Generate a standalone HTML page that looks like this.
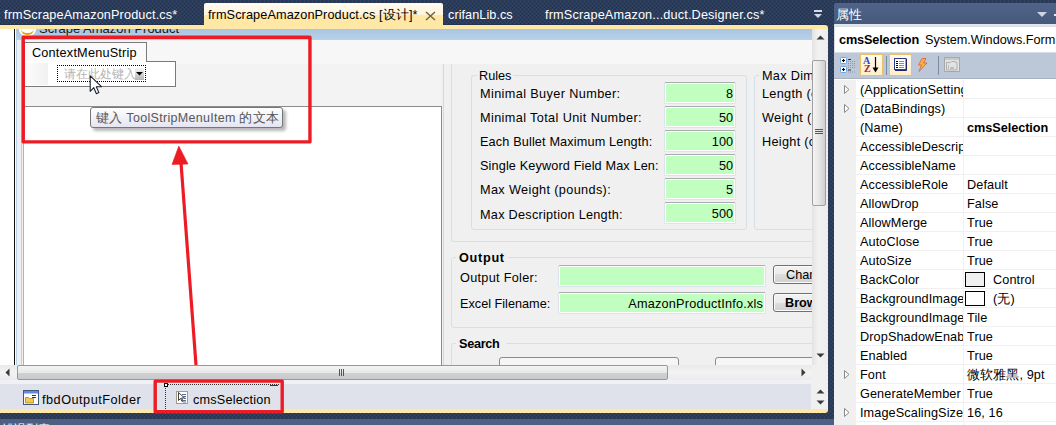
<!DOCTYPE html>
<html><head><meta charset="utf-8">
<style>
*{margin:0;padding:0;box-sizing:border-box}
html,body{width:1056px;height:425px;overflow:hidden;background:#2c3c59;font-family:"Liberation Sans",sans-serif;font-size:12.7px;color:#000}
.a{position:absolute}
.t{position:absolute;white-space:nowrap;line-height:1}
.tb{position:absolute;width:72px;height:22px;background:#c0ffc0;border:1px solid #dde3ea;border-top-color:#abadb3;border-radius:2px;box-shadow:inset 0 0 0 1px #fff}
.tb span,.tb2 span{position:absolute;right:2px;top:5px;line-height:1;white-space:nowrap}
.tb2{position:absolute;height:22px;background:#c0ffc0;border:1px solid #dde3ea;border-top-color:#abadb3;border-radius:2px;box-shadow:inset 0 0 0 1px #fff}
.btn{position:absolute;width:70px;height:19px;border:1px solid #707070;border-radius:3px;background:linear-gradient(#f2f2f2,#ebebeb 50%,#dddddd 50%,#cfcfcf);box-shadow:inset 0 0 0 1px #fcfcfc}
.btn span{position:absolute;left:12px;top:3px;line-height:1;white-space:nowrap}
.gb{position:absolute;border:1px solid #d5dfe5;border-radius:3px}
.pr{position:absolute;left:0;width:222px;height:19px;border-bottom:1px solid #f0f0f0}
.pr::before{content:"";position:absolute;left:0;top:0;width:22px;height:19px;background:#f0f0f0}
.pr::after{content:"";position:absolute;left:129px;top:0;width:1px;height:19px;background:#f0f0f0}
.pn{position:absolute;left:26px;top:4px;width:103px;overflow:hidden;white-space:nowrap;line-height:1;letter-spacing:.1px}
.pv{position:absolute;left:133px;top:4px;white-space:nowrap;line-height:1;letter-spacing:.1px}
.sw{left:131px;top:2px;width:20px;height:15px;border:1px solid #000}
</style></head><body>
<div class="a" style="left:0;top:0;width:1056px;height:425px;overflow:hidden">
<svg class="a" style="left:0;top:0" width="1056" height="425"><defs><pattern id="dots" width="4" height="4" patternUnits="userSpaceOnUse"><rect width="4" height="4" fill="#2b3c5a"/><rect x="0" y="1" width="1" height="1" fill="#36496b"/><rect x="2" y="3" width="1" height="1" fill="#36496b"/><rect x="2" y="1" width="1" height="1" fill="#243350"/><rect x="0" y="3" width="1" height="1" fill="#243350"/></pattern></defs><rect width="1056" height="425" fill="url(#dots)"/></svg>

<!-- ===== tab bar ===== -->
<div class="t" style="left:4px;top:9px;color:#fff;letter-spacing:.13px">frmScrapeAmazonProduct.cs*</div>
<div class="a" style="left:204px;top:3px;width:239px;height:24px;border-radius:2px 2px 0 0;background:linear-gradient(#fffcf4,#fff4d8 48%,#ffe8a6 52%,#ffe8a6)"></div>
<div class="t" style="left:208px;top:9px;color:#000;letter-spacing:.1px">frmScrapeAmazonProduct.cs [设计]*</div>
<svg class="a" style="left:425px;top:11px" width="11" height="10"><path d="M1 1l9 8M10 1l-9 8" stroke="#6b6145" stroke-width="1.4"/></svg>
<div class="t" style="left:448px;top:9px;color:#fff;letter-spacing:.05px">crifanLib.cs</div>
<div class="t" style="left:545px;top:9px;color:#fff;letter-spacing:.15px">frmScrapeAmazon...duct.Designer.cs*</div>
<svg class="a" style="left:814px;top:10px" width="9" height="9"><rect x="0" y="0" width="8" height="2" fill="#d3d9e4"/><path d="M0 4h8l-4 4z" fill="#d3d9e4"/></svg>

<!-- yellow strip -->
<div class="a" style="left:0;top:24px;width:204px;height:1px;background:#23324e"></div><div class="a" style="left:443px;top:24px;width:385px;height:1px;background:#23324e"></div><div class="a" style="left:204px;top:24px;width:239px;height:1px;background:#ffe8a6"></div><div class="a" style="left:0;top:25px;width:828px;height:5px;background:#ffe8a6;border-radius:0 3px 0 0"></div>

<!-- ===== document area ===== -->
<div class="a" style="left:0;top:29px;width:812px;height:336px;background:#fff;overflow:hidden">
  <div class="a" style="left:14px;top:0;width:1px;height:336px;background:#111"></div>
  <!-- form frame -->
  <div class="a" style="left:16px;top:0;width:800px;height:340px;background:#eeeff1;border-left:1px solid #b9d1ea"></div>
  <div class="a" style="left:16px;top:0;width:800px;height:11px;background:linear-gradient(#a9c4e2,#bad2ea)"></div>
  <div class="a" style="left:19px;top:0;width:17px;height:7px;background:#fff;border-radius:0 0 8px 8px"></div>
  <div class="a" style="left:21px;top:0;width:13px;height:6px;border-bottom:2px solid #f5a000;border-radius:0 0 7px 7px"></div>
  <div class="t" style="left:39px;top:-7px;color:#1a1a1a;font-size:13px;letter-spacing:0px">Scrape Amazon Product</div>
  <div class="a" style="left:21px;top:11px;width:1px;height:330px;background:#b9d1ea"></div>
  <!-- client -->
  <div class="a" style="left:22px;top:11px;width:790px;height:330px;background:#f0f0f0"></div>
  <div class="a" style="left:22px;top:11px;width:790px;height:24px;background:#f7f7f7"></div>
  <div class="a" style="left:22px;top:35px;width:419px;height:42px;background:#f3f3f3"></div>
  <!-- white panel -->
  <div class="a" style="left:23px;top:77px;width:419px;height:270px;background:#fff;border-top:1px solid #8c8c8c;border-left:1px solid #a9b4c2;border-right:1px solid #8c8c8c"></div>
  <!-- splitter lines -->
  <div class="a" style="left:443px;top:35px;width:1px;height:310px;background:#d0dae4"></div>
  
  <div class="a" style="left:22px;top:11px;width:790px;height:24px;background:#f7f7f7"></div>

  <!-- context menu strip -->
  <div class="a" style="left:24px;top:13px;width:123px;height:20px;background:#fafafa;border:1px solid #7a7a7a;border-bottom:none"></div>
  <div class="t" style="left:32px;top:18px;color:#000;letter-spacing:.2px">ContextMenuStrip</div>
  <div class="a" style="left:24px;top:32px;width:152px;height:26px;background:#fff;border:1px solid #7a7a7a;border-top:none"></div>
  <div class="a" style="left:146px;top:32px;width:30px;height:1px;background:#7a7a7a"></div>
  <div class="a" style="left:25px;top:34px;width:23px;height:22px;background:linear-gradient(90deg,#fcfcfc,#f1f1f1)"></div>
  <div class="a" style="left:57px;top:36px;width:89px;height:17px;border:1px dotted #000"></div>
  <div class="t" style="left:64px;top:39px;color:#b4b4b4;font-size:12px">请在此处键入</div>
  <div class="a" style="left:135px;top:39px;width:9px;height:12px;background:linear-gradient(#f6f6f6,#b4b4b4)"></div>
  <svg class="a" style="left:136px;top:43px" width="8" height="5"><path d="M0 0h7l-3.5 3.5z" fill="#000"/></svg>
  <!-- cursor -->
  <svg class="a" style="left:89px;top:46px" width="14" height="20"><path d="M1.2 0.8v15.5l3.6-3.6 2.6 6 2.5-1.1-2.6-5.9h5.2z" fill="#fff" stroke="#1a1f30" stroke-width="1.1" stroke-linejoin="round"/></svg>

  <!-- tooltip -->
  <div class="a" style="left:93px;top:81px;width:193px;height:21px;border-radius:3px;background:rgba(0,0,0,.28);filter:blur(1.5px)"></div>
  <div class="a" style="left:90px;top:78px;width:193px;height:21px;border-radius:3px;border:1px solid #767676;background:linear-gradient(#fff,#e4e5f0)"></div>
  <div class="t" style="left:96px;top:83px;color:#575757;font-size:12.5px;letter-spacing:.3px">键入 ToolStripMenuItem 的文本</div>

  <!-- right panel content -->
  <div class="gb" style="left:451px;top:35px;width:400px;height:178px;border-top:none;border-radius:0 0 3px 3px"></div>
  <!-- Rules -->
  <div class="gb" style="left:471px;top:46px;width:276px;height:155px"></div>
  <div class="a" style="left:477px;top:40px;width:36px;height:12px;background:#f0f0f0"></div>
  <div class="t" style="left:479px;top:41px;letter-spacing:0px">Rules</div>
  <div class="t" style="left:480px;top:59px;letter-spacing:.38px">Minimal Buyer Number:</div>
  <div class="t" style="left:480px;top:83px;letter-spacing:.38px">Minimal Total Unit Number:</div>
  <div class="t" style="left:480px;top:107px;letter-spacing:.14px">Each Bullet Maximum Length:</div>
  <div class="t" style="left:480px;top:131px;letter-spacing:.13px">Single Keyword Field Max Len:</div>
  <div class="t" style="left:480px;top:155px;letter-spacing:.36px">Max Weight (pounds):</div>
  <div class="t" style="left:480px;top:180px;letter-spacing:.26px">Max Description Length:</div>
  <div class="tb" style="left:664px;top:53px"><span>8</span></div>
  <div class="tb" style="left:664px;top:77px"><span>50</span></div>
  <div class="tb" style="left:664px;top:101px"><span>100</span></div>
  <div class="tb" style="left:664px;top:125px"><span>50</span></div>
  <div class="tb" style="left:664px;top:149px"><span>5</span></div>
  <div class="tb" style="left:664px;top:173px"><span>500</span></div>
  <!-- Max Dim -->
  <div class="gb" style="left:754px;top:46px;width:120px;height:155px"></div>
  <div class="a" style="left:759px;top:40px;width:60px;height:12px;background:#f0f0f0"></div>
  <div class="t" style="left:762px;top:41px;letter-spacing:.3px">Max Dimension</div>
  <div class="t" style="left:762px;top:59px;letter-spacing:.3px">Length (cm):</div>
  <div class="t" style="left:762px;top:83px;letter-spacing:.3px">Weight (kg):</div>
  <div class="t" style="left:762px;top:107px;letter-spacing:.3px">Height (cm):</div>

  <!-- Output -->
  <div class="gb" style="left:451px;top:228px;width:400px;height:71px"></div>
  <div class="a" style="left:456px;top:220px;width:52px;height:14px;background:#f0f0f0"></div>
  <div class="t" style="left:459px;top:223px;font-weight:bold;letter-spacing:.7px">Output</div>
  <div class="t" style="left:460px;top:243px;letter-spacing:.3px">Output Foler:</div>
  <div class="t" style="left:460px;top:269px;letter-spacing:0px">Excel Filename:</div>
  <div class="tb2" style="left:558px;top:236px;width:208px"></div>
  <div class="tb2" style="left:558px;top:263px;width:208px"><span style="letter-spacing:.2px">AmazonProductInfo.xls</span></div>
  <div class="btn" style="left:773px;top:236px"><span>Change</span></div>
  <div class="btn" style="left:773px;top:264px"><span style="font-weight:bold;left:11px">Browse</span></div>

  <!-- Search -->
  <div class="gb" style="left:451px;top:314px;width:400px;height:70px"></div>
  <div class="a" style="left:456px;top:306px;width:50px;height:14px;background:#f0f0f0"></div>
  <div class="t" style="left:459px;top:309px;font-weight:bold;letter-spacing:-.3px">Search</div>
  <div class="a" style="left:499px;top:328px;width:180px;height:20px;border:1px solid #8a8a8a;border-radius:3px;background:#f6f6f6"></div>
  <div class="a" style="left:715px;top:328px;width:140px;height:20px;border:1px solid #8a8a8a;border-radius:3px;background:#f6f6f6"></div>
</div>

<!-- vertical scrollbar -->
<div class="a" style="left:812px;top:29px;width:16px;height:336px;background:linear-gradient(90deg,#e3e3e3,#f2f2f2 40%,#ececec)"></div>
<svg class="a" style="left:816px;top:35px" width="10" height="6"><path d="M0.5 4.5h8l-4-4z" fill="#3a3a3a"/></svg>
<div class="a" style="left:812px;top:60px;width:14px;height:146px;border:1px solid #a0a0a0;border-radius:2px;background:linear-gradient(90deg,#f4f4f4,#e6e6e6 50%,#cfcfcf)"></div>
<div class="a" style="left:815px;top:129px;width:8px;height:1px;background:#555;box-shadow:0 2px 0 #555,0 4px 0 #555"></div>
<svg class="a" style="left:816px;top:353px" width="10" height="6"><path d="M0.5 0.5h8l-4 4z" fill="#3a3a3a"/></svg>

<!-- horizontal scrollbar -->
<div class="a" style="left:0;top:365px;width:812px;height:15px;background:linear-gradient(#e9e9e9,#f3f3f3 50%,#ebebeb)"></div>
<svg class="a" style="left:5px;top:368px" width="6" height="10"><path d="M4.5 0.5v8l-4-4z" fill="#3a3a3a"/></svg>
<div class="a" style="left:17px;top:365px;width:651px;height:15px;border:1px solid #979797;border-radius:2px;background:linear-gradient(#f4f4f4,#e8e8e8 50%,#d0d1d3 50%,#c9cacc)"></div>
<div class="a" style="left:339px;top:369px;width:1px;height:7px;background:#555;box-shadow:2px 0 0 #555,4px 0 0 #555"></div>
<svg class="a" style="left:801px;top:368px" width="6" height="10"><path d="M0.5 0.5v8l4-4z" fill="#3a3a3a"/></svg>
<div class="a" style="left:812px;top:365px;width:16px;height:15px;background:#f0f0f0"></div>

<!-- component tray -->
<div class="a" style="left:0;top:380px;width:828px;height:30px;background:#dfe2ea;border-top:4px solid #f0f1f4"></div>
<svg class="a" style="left:23px;top:390px" width="16" height="15"><rect x=".5" y=".5" width="15" height="14" fill="#fff" stroke="#44597a"/><rect x="1" y="1" width="14" height="2.5" fill="#5b8de0"/><path d="M9 5.5h4M9 7.5h4" stroke="#2a3550"/><path d="M2.5 7.5h3l1 1h4v4.5h-8z" fill="#f2c94c" stroke="#8a6a10" stroke-width=".6"/></svg>
<div class="t" style="left:42px;top:394px;color:#000;letter-spacing:.5px">fbdOutputFolder</div>
<div class="a" style="left:165px;top:384px;width:114px;height:25px;border-left:1px dotted #333;border-top:1px dotted #333"></div><div class="a" style="left:270px;top:385px;width:8px;height:1px;background:#333"></div>
<div class="a" style="left:164px;top:383px;width:4px;height:4px;border:1px solid #000;background:#fff"></div>
<svg class="a" style="left:176px;top:391px" width="13" height="13"><rect x=".5" y=".5" width="11" height="12" fill="#fff" stroke="#a49c88"/><path d="M2.5 1.5v8l2-2 1.5 3 1-.5-1.5-3h3z" fill="#fff" stroke="#111" stroke-width=".8"/><path d="M6 3.5h4M7 5.5h3M8 7.5h2M7 9.5h3M7 11h3" stroke="#5a6d98"/></svg>
<div class="t" style="left:193px;top:394px;color:#000;letter-spacing:.2px">cmsSelection</div>
<div class="a" style="left:811px;top:380px;width:17px;height:29px;background:#f0f0f0"></div><svg class="a" style="left:816px;top:387px" width="10" height="20"><path d="M0.5 6.5h8l-4-4zM0.5 13.5h8l-4 4z" fill="#3a3a3a"/></svg>

<!-- bottom yellow strip and bottom panel -->
<div class="a" style="left:0;top:409px;width:828px;height:4px;background:#ffe8a6;border-radius:0 0 3px 0"></div>
<div class="a" style="left:0;top:419px;width:1056px;height:6px;background:#4d6082;border-radius:0 3px 0 0;overflow:hidden"><div class="t" style="left:2px;top:4px;color:#fff;font-size:12px">错误列表</div></div>

<!-- ===== properties panel ===== -->
<div class="a" style="left:834px;top:3px;width:222px;height:21px;background:linear-gradient(#50648a,#45597b);border-radius:3px 0 0 0"></div><div class="a" style="left:1054px;top:14px;width:2px;height:2px;background:#e8ecf2"></div>
<div class="t" style="left:836px;top:8px;color:#fff;font-size:13px">属性</div>
<svg class="a" style="left:1037px;top:12px" width="10" height="6"><path d="M0 0h10l-5 5z" fill="#cdd5e2"/></svg>
<div class="a" style="left:834px;top:24px;width:222px;height:401px;background:#fff"></div>
<div class="a" style="left:834px;top:24px;width:222px;height:3px;background:linear-gradient(#e6e9ef,#d6dce6)"></div><div class="a" style="left:834px;top:24px;width:1px;height:28px;background:#d6dce6"></div>
<div class="t" style="left:839px;top:34px;font-weight:bold;letter-spacing:-.15px">cmsSelection</div>
<div class="t" style="left:925px;top:34px;letter-spacing:0px">System.Windows.Forms.ContextMenuStrip</div>
<!-- toolbar -->
<div class="a" style="left:834px;top:52px;width:222px;height:26px;background:#bcc7d8;border-top:1px solid #d5dce8"></div>
<svg class="a" style="left:839px;top:56px" width="18" height="18">
<rect x="1.5" y="1.5" width="6" height="6" rx="1" fill="#fff" stroke="#6aa4e0"/><rect x="1.5" y="10.5" width="6" height="6" rx="1" fill="#fff" stroke="#6aa4e0"/>
<path d="M3 4.5h3M4.5 3v3M3 13.5h3M4.5 12v3" stroke="#000" stroke-width="1.2"/>
<path d="M9 3.5h3M9 14h3" stroke="#333"/>
<path d="M9 5.5h8M9 7.5h8M9 9.5h8M9 11.5h8M9 16h8" stroke="#8a9ab0" stroke-dasharray="1 1"/></svg>
<div class="a" style="left:860px;top:54px;width:23px;height:22px;background:linear-gradient(#fffaf0,#ffeec8);border:1px solid #e8c16a"></div>
<div class="t" style="left:863px;top:56px;font-family:'Liberation Serif',serif;font-size:10px;color:#2a50c0;font-weight:bold">A</div>
<div class="t" style="left:864px;top:64px;font-family:'Liberation Serif',serif;font-size:10px;color:#a02030;font-weight:bold">Z</div>
<svg class="a" style="left:872px;top:56px" width="8" height="18"><path d="M3.5 1v14" stroke="#000" stroke-width="1.2"/><path d="M.5 11.5l3 5 3-5z" fill="#000"/></svg>
<div class="a" style="left:886px;top:56px;width:1px;height:19px;background:#7d8ba0"></div>
<div class="a" style="left:889px;top:54px;width:23px;height:22px;background:linear-gradient(#fffaf0,#ffeec8);border:1px solid #e8c16a"></div>
<svg class="a" style="left:894px;top:58px" width="13" height="13">
<rect x=".5" y=".5" width="11.5" height="11" fill="#fff" stroke="#2c3a8c"/><path d="M12.5 1v11.5H1" stroke="#1e2870" fill="none"/>
<path d="M2 3.5h2M2 5.5h2M2 7.5h2M2 9.5h2" stroke="#000"/><path d="M5 3.5h5M5 5.5h5M5 7.5h5M5 9.5h5" stroke="#8890a0"/></svg>
<svg class="a" style="left:917px;top:58px" width="11" height="14"><path d="M5 0.5L1.5 7h3L2 13.5 10 5H6.5L9 0.5z" fill="#f7b23a" stroke="#e05030" stroke-width=".7"/></svg>
<div class="a" style="left:938px;top:56px;width:1px;height:19px;background:#7d8ba0"></div>
<svg class="a" style="left:944px;top:57px" width="16" height="15"><rect x=".5" y=".5" width="15" height="14" fill="#e2e2e2" stroke="#a8a8a8"/><rect x="1" y="1" width="14" height="2" fill="#c8c8c8"/><path d="M2.5 5.5h4l1-1h4v1h1.5v7.5h-10.5z" fill="none" stroke="#b0b0b0"/><path d="M4 9h1M4 11h1M6 11h4" stroke="#9a9a9a"/></svg>
<!-- grid -->
<div class="a" style="left:834px;top:78px;width:222px;height:1px;background:#a7b1c0"></div><div class="a" style="left:834px;top:80px;width:222px;height:345px;background:#fff;overflow:hidden">
<div class="pr" style="top:0px"><svg class="a" style="left:10px;top:5px" width="6" height="10"><path d="M.5 .5v8l4.5-4z" fill="#fff" stroke="#888"/></svg><div class="pn">(ApplicationSettings)</div><div class="pv"></div></div>
<div class="pr" style="top:19px"><svg class="a" style="left:10px;top:5px" width="6" height="10"><path d="M.5 .5v8l4.5-4z" fill="#fff" stroke="#888"/></svg><div class="pn">(DataBindings)</div><div class="pv"></div></div>
<div class="pr" style="top:38px"><div class="pn">(Name)</div><div class="pv"><b style="letter-spacing:-.05px">cmsSelection</b></div></div>
<div class="pr" style="top:57px"><div class="pn">AccessibleDescription</div><div class="pv"></div></div>
<div class="pr" style="top:76px"><div class="pn">AccessibleName</div><div class="pv"></div></div>
<div class="pr" style="top:95px"><div class="pn">AccessibleRole</div><div class="pv">Default</div></div>
<div class="pr" style="top:114px"><div class="pn">AllowDrop</div><div class="pv">False</div></div>
<div class="pr" style="top:133px"><div class="pn">AllowMerge</div><div class="pv">True</div></div>
<div class="pr" style="top:152px"><div class="pn">AutoClose</div><div class="pv">True</div></div>
<div class="pr" style="top:171px"><div class="pn">AutoSize</div><div class="pv">True</div></div>
<div class="pr" style="top:190px"><div class="pn">BackColor</div><div class="a sw" style="background:#f0f0f0"></div><div class="pv" style="left:159px">Control</div></div>
<div class="pr" style="top:209px"><div class="pn">BackgroundImage</div><div class="a sw" style="background:#fff"></div><div class="pv" style="left:159px">(无)</div></div>
<div class="pr" style="top:228px"><div class="pn">BackgroundImageLayout</div><div class="pv">Tile</div></div>
<div class="pr" style="top:247px"><div class="pn">DropShadowEnabled</div><div class="pv">True</div></div>
<div class="pr" style="top:266px"><div class="pn">Enabled</div><div class="pv">True</div></div>
<div class="pr" style="top:285px"><svg class="a" style="left:10px;top:5px" width="6" height="10"><path d="M.5 .5v8l4.5-4z" fill="#fff" stroke="#888"/></svg><div class="pn">Font</div><div class="pv">微软雅黑, 9pt</div></div>
<div class="pr" style="top:304px"><div class="pn">GenerateMember</div><div class="pv">True</div></div>
<div class="pr" style="top:323px"><svg class="a" style="left:10px;top:5px" width="6" height="10"><path d="M.5 .5v8l4.5-4z" fill="#fff" stroke="#888"/></svg><div class="pn">ImageScalingSize</div><div class="pv">16, 16</div></div>
<div class="pr" style="top:342px"><div class="pn">Items</div><div class="pv">(集合)</div></div>
</div>

<!-- ===== red annotations ===== -->
<svg class="a" style="left:0;top:0" width="1056" height="425"><g fill="none" stroke="#ed1c24" stroke-width="3.4" stroke-linejoin="round">
<rect x="23.25" y="37.2" width="286.7" height="104.7"/>
<rect x="155.2" y="381.1" width="127" height="30.6"/></g>
<path d="M180.8 160L196 365" stroke="#ed1c24" stroke-width="3.2"/><path d="M178.8 146L172 164.5L188 164z" fill="#ed1c24" stroke="#ed1c24" stroke-width=".6" stroke-linejoin="round"/></svg>
</div>
</body></html>
